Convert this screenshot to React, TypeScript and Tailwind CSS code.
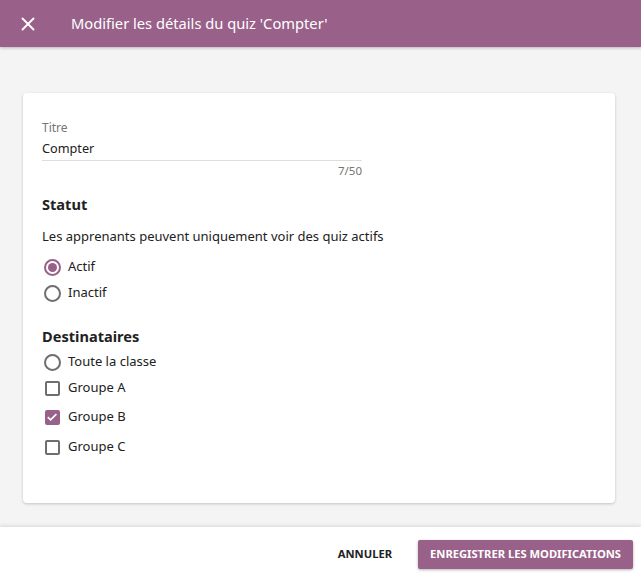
import { X } from "lucide-react";

function Radio({ checked, label }: { checked?: boolean; label: string }) {
  return (
    <div className="flex h-[26px] items-center gap-[6px]">
      <span className="flex w-[20px] justify-center">
        <span
          className={`flex h-[17px] w-[17px] items-center justify-center rounded-full border-2 ${
            checked ? "border-[#996189]" : "border-[#6e6e6e]"
          }`}
        >
          {checked && <span className="h-[9px] w-[9px] rounded-full bg-[#996189]" />}
        </span>
      </span>
      <span className="text-[13px] text-[#212121]">{label}</span>
    </div>
  );
}

function Checkbox({ checked, label, className = "" }: { checked?: boolean; label: string; className?: string }) {
  return (
    <div className={`flex h-[26px] items-center gap-[6px] ${className}`}>
      <span className="flex w-[20px] justify-center">
        {checked ? (
          <span className="flex h-[15px] w-[15px] items-center justify-center rounded-[2px] bg-[#996189]">
            <svg width="12" height="12" viewBox="0 0 12 12" fill="none">
              <path d="M1.8 6.2l2.8 2.7L10.4 3.2" stroke="white" strokeWidth="1.7" />
            </svg>
          </span>
        ) : (
          <span className="h-[15px] w-[15px] rounded-[2px] border-2 border-[#6e6e6e]" />
        )}
      </span>
      <span className="text-[13px] text-[#212121]">{label}</span>
    </div>
  );
}

export default function App() {
  return (
    <div className="flex h-[581px] flex-col bg-[#f4f4f4] font-['Noto_Sans',sans-serif] text-[#212121]">
      <header className="relative z-10 flex h-[47px] shrink-0 items-center bg-[#996189] pl-[17px] text-white shadow-[0_1px_3px_rgba(0,0,0,0.25)]">
        <X size={22} strokeWidth={2} />
        <h1 className="ml-[32px] text-[14.7px]">Modifier les détails du quiz 'Compter'</h1>
      </header>

      <main className="flex-1 pl-[23px] pr-[26px] pt-[46px]">
        <div className="h-[410px] rounded-[4px] bg-white pl-[19px] pt-[27px] shadow-[0_1px_3px_rgba(0,0,0,0.2)]">
          <div className="w-[320px]">
            <div className="text-[12px] leading-[16px] text-[#757575]">Titre</div>
            <div className="mt-[2px] border-b border-[#dedede] pb-[2px] text-[12.7px] leading-[20px]">Compter</div>
            <div className="mt-[2px] text-right text-[11.5px] leading-[16px] text-[#757575]">7/50</div>
          </div>

          <h2 className="mt-[13px] text-[14.6px] font-bold leading-[24px]">Statut</h2>
          <p className="mt-[10px] text-[13px] leading-[20px]">Les apprenants peuvent uniquement voir des quiz actifs</p>
          <div className="mt-[8px]">
            <Radio checked label="Actif" />
            <Radio label="Inactif" />
          </div>

          <h2 className="mt-[18px] text-[14.6px] font-bold leading-[24px]">Destinataires</h2>
          <div className="mt-[1px]">
            <Radio label="Toute la classe" />
            <Checkbox label="Groupe A" />
            <Checkbox checked label="Groupe B" className="mt-[3px]" />
            <Checkbox label="Groupe C" className="mt-[4px]" />
          </div>
        </div>
      </main>

      <footer className="flex h-[54px] shrink-0 items-center justify-end bg-white pr-[8px] shadow-[0_-1px_4px_rgba(0,0,0,0.12)]">
        <button className="h-[29px] px-[16px] text-[11.2px] font-bold uppercase text-[#212121]">Annuler</button>
        <button className="ml-[10px] h-[29px] rounded-[2px] bg-[#996189] px-[12px] text-[11.2px] font-bold uppercase text-white shadow-[0_1px_3px_rgba(0,0,0,0.3)]">
          Enregistrer les modifications
        </button>
      </footer>
    </div>
  );
}
